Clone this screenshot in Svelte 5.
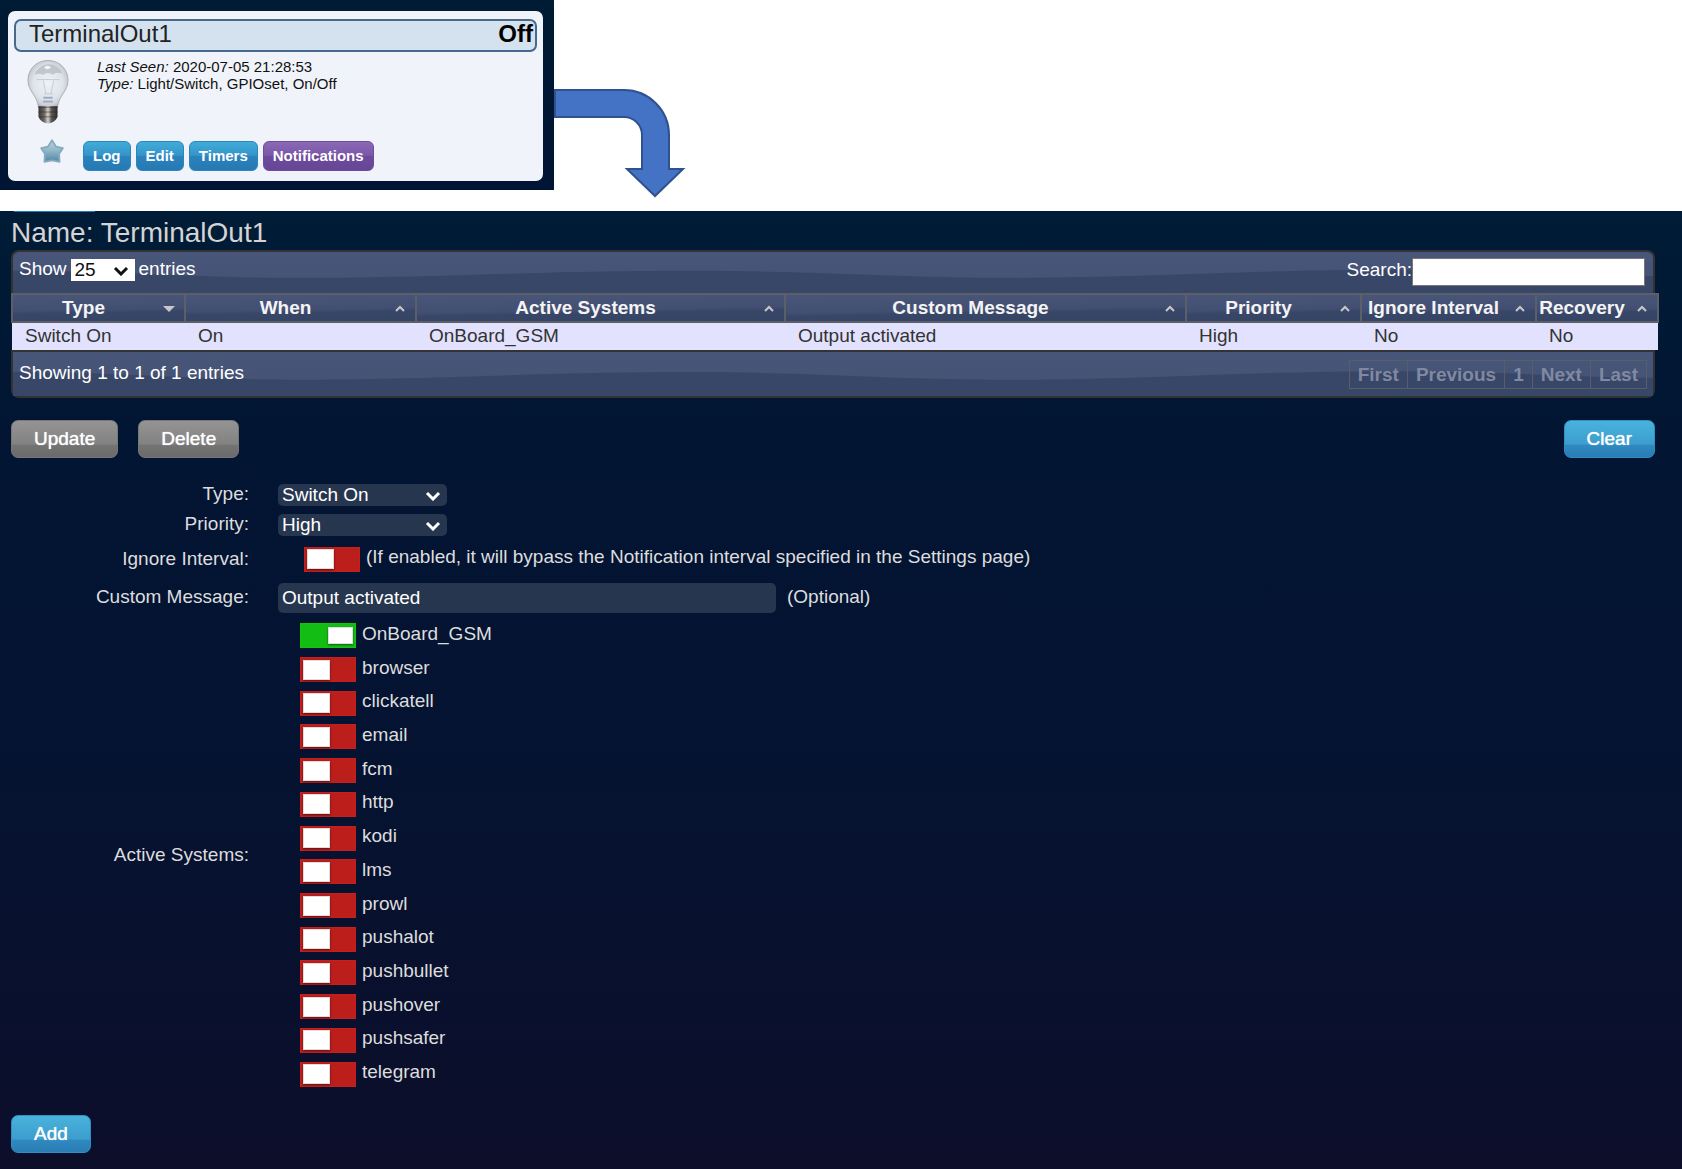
<script>
  const columns = [
    { title: 'Type', cls: 'c-type', sorted: true },
    { title: 'When', cls: 'c-when' },
    { title: 'Active Systems', cls: 'c-systems' },
    { title: 'Custom Message', cls: 'c-message' },
    { title: 'Priority', cls: 'c-priority' },
    { title: 'Ignore Interval', cls: 'c-ignore' },
    { title: 'Recovery', cls: 'c-recovery' },
  ];
  const rows = [['Switch On', 'On', 'OnBoard_GSM', 'Output activated', 'High', 'No', 'No']];
  const pages = ['First', 'Previous', '1', 'Next', 'Last'];
  let systems = $state([
    { name: 'OnBoard_GSM', on: true },
    ...['browser', 'clickatell', 'email', 'fcm', 'http', 'kodi', 'lms', 'prowl', 'pushalot', 'pushbullet', 'pushover', 'pushsafer', 'telegram'].map(
      (name) => ({ name, on: false })
    ),
  ]);
  let ignoreInterval = $state(false);
  let message = $state('Output activated');
</script>

{#snippet wave()}
  <svg class="wave" viewBox="0 0 1644 46" preserveAspectRatio="none" aria-hidden="true">
    <path
      d="M0 21 C100 21 180 29 290 29 C430 29 520 21 680 21 C800 21 880 29 1000 29 C1140 29 1230 20 1390 20 C1500 20 1560 27 1644 27 V46 H0Z"
    />
  </svg>
{/snippet}

{#snippet chevron()}
  <svg class="chevron" viewBox="0 0 16 10" aria-hidden="true"><path d="M2 2 L8 8 L14 2" /></svg>
{/snippet}

<div class="page">
  <header class="top">
    <div class="device-frame">
      <section class="device">
        <div class="device-title">
          <h2>TerminalOut1</h2>
          <strong>Off</strong>
        </div>
        <div class="device-body">
          <svg class="bulb" viewBox="0 0 44 68" aria-hidden="true">
            <defs>
              <radialGradient id="glass" cx="50%" cy="48%" r="56%">
                <stop offset="0" stop-color="#eef1f7" />
                <stop offset="0.65" stop-color="#dfe3ea" />
                <stop offset="0.88" stop-color="#c9ccd3" />
                <stop offset="1" stop-color="#999ca1" />
              </radialGradient>
              <linearGradient id="cap" x1="0" x2="1" y1="0" y2="0">
                <stop offset="0" stop-color="#3a3836" />
                <stop offset="0.3" stop-color="#6b6560" />
                <stop offset="0.5" stop-color="#d8d3cc" />
                <stop offset="0.68" stop-color="#5c5854" />
                <stop offset="1" stop-color="#2e2c2a" />
              </linearGradient>
            </defs>
            <path
              d="M22 1 C10 1 1 10 1 22 C1 33 11 38 12 50 H32 C33 38 43 33 43 22 C43 10 34 1 22 1Z"
              fill="url(#glass)"
              stroke="#a9acb1"
            />
            <path d="M8 16 Q12 6 22 5 Q33 5 37 15 Q31 12 27 16 Q21 12 17 16 Q12 14 8 16Z" fill="#aab0bd" opacity="0.6" />
            <path d="M18 8 Q22 5 25 8 Q23 11 20 10Z" fill="#fff" opacity="0.8" />
            <path d="M10 21 H34 M17 22 L20 36 M28 22 L25 36 M18 36 H27" fill="none" stroke="#c3c9d3" />
            <path d="M17 40 H27 M17 44 H27" fill="none" stroke="#9eabbf" stroke-width="2" />
            <path d="M12 49 H32 V60 Q30 66 22 67 Q14 66 12 60Z" fill="url(#cap)" />
            <path d="M12 50 H32 M12 55 H32 M13 60 H31" stroke="#2b2927" stroke-opacity="0.55" fill="none" />
          </svg>
          <p class="details">
            <em>Last Seen:</em> 2020-07-05 21:28:53<br />
            <em>Type:</em> Light/Switch, GPIOset, On/Off
          </p>
        </div>
        <div class="device-actions">
          <svg class="star" viewBox="0 0 24 24" aria-hidden="true">
            <defs>
              <linearGradient id="starfill" x1="0" x2="0" y1="0" y2="1">
                <stop offset="0" stop-color="#bcd3dd" />
                <stop offset="0.5" stop-color="#8fb5c7" />
                <stop offset="1" stop-color="#4f88a4" />
              </linearGradient>
            </defs>
            <path
              d="M12 2 L15.8 8 L22 9.4 L18.6 14.6 L19 22 L12 20.6 L5 22 L5.4 14.6 L2 9.4 L8.2 8Z"
              fill="url(#starfill)"
              stroke="#86abbd"
              stroke-width="1.6"
              stroke-linejoin="round"
            />
          </svg>
          <button class="small">Log</button>
          <button class="small">Edit</button>
          <button class="small">Timers</button>
          <button class="small purple">Notifications</button>
        </div>
      </section>
    </div>
    <svg class="arrow" viewBox="0 0 132 110" aria-hidden="true">
      <path d="M1 2 H70 A45 45 0 0 1 115 47 V81 H129 L101 108 L73 81 H88 V47 A18 18 0 0 0 70 29 H1Z" />
    </svg>
  </header>

  <main class="panel">
    <div class="sliver"></div>
    <h1>Name: TerminalOut1</h1>

    <div class="grid">
      <div class="bar bar-top">
        {@render wave()}
        <label class="length">
          Show
          <span class="select-wrap white">
            <select><option>25</option><option>50</option></select>
            {@render chevron()}
          </span>
          entries
        </label>
        <label class="search">Search:<input type="search" /></label>
      </div>

      <table>
        <thead>
          <tr>
            {#each columns as column}
              <th class={column.cls}>
                {column.title}
                <svg class="sort" viewBox="0 0 12 8" aria-hidden="true">
                  {#if column.sorted}
                    <path class="solid" d="M0 1 H12 L6 7Z" />
                  {:else}
                    <path class="line" d="M2 6 L6 2 L10 6" />
                  {/if}
                </svg>
              </th>
            {/each}
          </tr>
        </thead>
        <tbody>
          {#each rows as row}
            <tr>
              {#each row as cell}<td>{cell}</td>{/each}
            </tr>
          {/each}
        </tbody>
      </table>

      <div class="bar bar-bottom">
        {@render wave()}
        <span class="info">Showing 1 to 1 of 1 entries</span>
        <nav class="pages">
          {#each pages as page}<button disabled>{page}</button>{/each}
        </nav>
      </div>
    </div>

    <div class="commands">
      <button class="big gray">Update</button>
      <button class="big gray">Delete</button>
      <button class="big push">Clear</button>
    </div>

    <form class="form" onsubmit={(e) => e.preventDefault()}>
      <div class="row select-row">
        <label class="name" for="type">Type:</label>
        <span class="select-wrap dark">
          <select id="type"><option>Switch On</option><option>Switch Off</option></select>
          {@render chevron()}
        </span>
      </div>
      <div class="row select-row">
        <label class="name" for="priority">Priority:</label>
        <span class="select-wrap dark">
          <select id="priority"><option>High</option><option>Normal</option></select>
          {@render chevron()}
        </span>
      </div>
      <div class="row ignore-row">
        <label class="name" for="ignore">Ignore Interval:</label>
        <div class="toggle-line">
          <input id="ignore" class="toggle" type="checkbox" bind:checked={ignoreInterval} />
          <span class="caption">(If enabled, it will bypass the Notification interval specified in the Settings page)</span>
        </div>
      </div>
      <div class="row message-row">
        <label class="name" for="message">Custom Message:</label>
        <input id="message" class="message" type="text" bind:value={message} />
        <span class="caption">(Optional)</span>
      </div>
      <div class="row systems-row">
        <span class="name" id="systems-label">Active Systems:</span>
        <div class="systems" role="group" aria-labelledby="systems-label">
          {#each systems as system}
            <label class="toggle-line">
              <input class="toggle" type="checkbox" bind:checked={system.on} />
              <span class="caption">{system.name}</span>
            </label>
          {/each}
        </div>
      </div>
    </form>

    <button class="big add">Add</button>
  </main>
</div>

<style>
  :global(body) {
    margin: 0;
    background: #fff;
  }
  .page {
    font: 19px/22px 'Liberation Sans', Arial, sans-serif;
    min-height: 100vh;
    display: flex;
    flex-direction: column;
  }
  button,
  input,
  select {
    font: inherit;
    margin: 0;
  }
  h1,
  h2,
  p {
    margin: 0;
    font-weight: 400;
  }

  .top {
    display: flex;
    align-items: flex-start;
    min-height: 211px;
  }
  .device-frame {
    width: 554px;
    box-sizing: border-box;
    padding: 11px 11px 9px 8px;
    background: linear-gradient(#001b34, #001433);
  }
  .device {
    box-sizing: border-box;
    min-height: 170px;
    padding: 8px 6px;
    border-radius: 7px;
    background: #f0f4fa;
    color: #111;
    display: flex;
    flex-direction: column;
  }
  .device-title {
    display: flex;
    justify-content: space-between;
    align-items: center;
    height: 26px;
    padding: 0 2px 3px 13px;
    border: 2px solid #47698c;
    border-radius: 7px;
    background: #d4e2f0;
    color: #222;
  }
  .device-title h2,
  .device-title strong {
    font-size: 24px;
    line-height: 26px;
  }
  .device-title strong {
    color: #000;
  }
  .device-body {
    display: flex;
    gap: 26px;
    padding: 6px 0 0 13px;
    height: 80px;
  }
  .bulb {
    width: 42px;
    height: 68px;
  }
  .details {
    font-size: 15px;
    line-height: 17px;
    padding-left: 2px;
  }
  .device-actions {
    display: flex;
    gap: 5px;
    align-items: flex-start;
    padding-left: 25px;
  }
  .star {
    width: 26px;
    height: 26px;
    margin-right: 13px;
  }
  .small {
    height: 30px;
    margin-top: 3px;
    padding: 0 9px;
    border: 1px solid #2b86bd;
    border-radius: 6px;
    background: linear-gradient(#41acd7, #3494ca 48%, #2a83bd 50%, #2779b3);
    color: #fff;
    font-size: 15px;
    font-weight: 700;
  }
  .small.purple {
    border-color: #6c4ba0;
    background: linear-gradient(#8a68b5, #7a58a8 48%, #6d4b9c 50%, #684696);
  }
  .arrow {
    width: 132px;
    height: 110px;
    margin-top: 88px;
    fill: #4472c4;
    stroke: #2f528f;
    stroke-width: 2;
  }

  .panel {
    flex: 1;
    display: flex;
    flex-direction: column;
    align-items: stretch;
    padding: 0 27px 16px 11px;
    background: linear-gradient(#001c36, #021533 25%, #051331 60%, #0c0e2a);
    color: #ddd;
  }
  .sliver {
    width: 81px;
    height: 1px;
    margin-left: 3px;
    background: #1f7ab8;
  }
  h1 {
    font-size: 28px;
    line-height: 34px;
    padding-top: 4px;
    color: #d4d4d4;
  }

  .bar {
    position: relative;
    display: flex;
    justify-content: space-between;
    box-sizing: border-box;
    border: 2px solid #333;
    background: linear-gradient(#485679, #445174);
    color: #fff;
  }
  .bar-top {
    height: 43px;
    padding: 6px 8px 0 6px;
    border-bottom: 0;
    border-radius: 8px 8px 0 0;
  }
  .bar-bottom {
    height: 48px;
    padding: 8px 6px 0;
    border-radius: 0 0 8px 8px;
  }
  .wave {
    position: absolute;
    inset: 0;
    width: 100%;
    height: 100%;
    fill: #384767;
  }
  .length,
  .search,
  .info,
  .pages {
    position: relative;
    display: flex;
    align-items: flex-start;
  }
  .length {
    gap: 4px;
  }
  .search input {
    width: 233px;
    height: 28px;
    box-sizing: border-box;
    padding: 0 4px;
    border: 1px solid #777;
    background: #fff;
    outline: 0;
  }
  .search {
    line-height: 24px;
  }
  .info {
    padding-top: 2px;
  }

  .select-wrap {
    position: relative;
    display: flex;
  }
  select {
    appearance: none;
    width: 100%;
    border: 0;
    padding: 0 4px;
    color: inherit;
    background: none;
    outline: 0;
  }
  .chevron {
    position: absolute;
    right: 6px;
    top: 7px;
    width: 16px;
    height: 10px;
    fill: none;
    stroke: currentColor;
    stroke-width: 3;
    pointer-events: none;
  }
  .white {
    width: 64px;
    height: 22px;
    margin-top: 1px;
    background: #fff;
    color: #111;
  }
  .dark {
    width: 169px;
    height: 22px;
    border-radius: 5px;
    background: #27364f;
    color: #fff;
  }
  .dark option {
    background: #27364f;
  }

  table {
    width: calc(100% + 2px);
    table-layout: fixed;
    border-collapse: collapse;
  }
  th {
    position: relative;
    height: 28px;
    box-sizing: border-box;
    padding: 0 31px 0 1px;
    border: 2px solid #5d5f68;
    background: linear-gradient(179deg, #485679 0%, #434f72 55%, #384767 65%, #354464);
    color: #f4f4f4;
    white-space: nowrap;
  }
  .c-type {
    width: 173px;
  }
  .c-when {
    width: 231px;
  }
  .c-systems {
    width: 369px;
  }
  .c-message {
    width: 401px;
  }
  .c-priority {
    width: 175px;
  }
  .c-ignore {
    width: 175px;
  }
  .c-recovery {
    width: 122px;
  }
  .sort {
    position: absolute;
    right: 9px;
    top: 10px;
    width: 12px;
    height: 8px;
  }
  .solid {
    fill: #c8c8c8;
  }
  .line {
    fill: none;
    stroke: #c8c8c8;
    stroke-width: 2;
  }
  td {
    height: 28px;
    padding: 0 0 2px 13px;
    box-sizing: border-box;
    background: #e2e2ff;
    color: #333;
  }

  .pages button {
    height: 29px;
    padding: 0 8px;
    margin-left: -1px;
    border: 1px solid #5a5c68;
    background: none;
    color: #8089a1;
    font-weight: 700;
  }

  .commands {
    display: flex;
    gap: 20px;
    margin-top: 22px;
  }
  .big {
    height: 38px;
    padding: 0 22px;
    border: 1px solid #2f8fc2;
    border-radius: 7px;
    background: linear-gradient(#49b3dc, #3c9dce 64%, #2f89c0 68%, #2a7cb4);
    color: #fff;
    text-shadow: 0 0 1px #fff;
  }
  .gray {
    border-color: #777;
    background: linear-gradient(#949494, #828282 64%, #737373 68%, #6b6b6b);
  }
  .push {
    margin-left: auto;
  }
  .add {
    align-self: flex-start;
    margin-top: auto;
  }

  .form {
    display: flex;
    flex-direction: column;
    margin-top: 26px;
  }
  .row {
    display: flex;
    align-items: center;
  }
  .name {
    width: 238px;
    margin-right: 29px;
    flex: none;
    text-align: right;
  }
  .select-row {
    height: 22px;
    margin-bottom: 8px;
  }
  .select-row .name {
    line-height: 20px;
    align-self: flex-start;
  }
  .ignore-row {
    height: 26px;
    margin: 2px 0 11px;
  }
  .ignore-row .toggle-line {
    padding-left: 26px;
  }
  .message-row {
    height: 30px;
  }
  .message-row .name,
  .message-row .caption {
    padding-bottom: 3px;
  }
  .message {
    width: 498px;
    height: 30px;
    box-sizing: border-box;
    margin-right: 11px;
    padding: 0 4px;
    border: 0;
    border-radius: 5px;
    background: #27364f;
    color: #fff;
    outline: 0;
  }
  .systems-row {
    margin-top: 6px;
  }
  .systems {
    display: grid;
    grid-auto-rows: 1fr;
    min-height: 472px;
    padding-left: 22px;
  }
  .toggle-line {
    display: flex;
    align-items: center;
    gap: 6px;
  }
  .toggle-line .caption {
    padding-bottom: 4px;
  }
  .toggle {
    appearance: none;
    display: flex;
    align-items: center;
    width: 56px;
    height: 25px;
    box-sizing: border-box;
    padding: 0 2px;
    border: 1px solid #c81e1e;
    background: #bc1e1b;
    flex: none;
  }
  .toggle::before {
    content: '';
    width: 27px;
    height: 20px;
    box-sizing: border-box;
    border: 1px solid #ddd;
    background: #fff;
    box-shadow: 0 1px 2px rgba(0, 0, 0, 0.5);
  }
  .toggle:checked {
    justify-content: flex-end;
    border-color: #12c412;
    background: #14bd14;
  }
  .toggle:checked::before {
    width: 25px;
    height: 17px;
  }
</style>
